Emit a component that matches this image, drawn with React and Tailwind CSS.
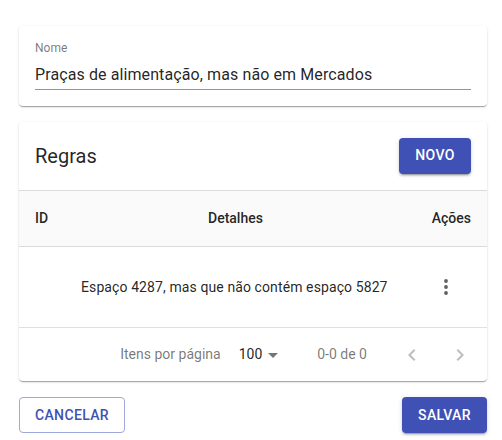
export default function App() {
  return (
    <div className="w-[502px] h-[440px] bg-white pl-[19px] pr-[15px] pt-[26px] text-[rgba(0,0,0,0.87)]" style={{ fontFamily: "Roboto, 'Liberation Sans', sans-serif" }}>
      {/* Nome card */}
      <div className="rounded shadow-[0_2px_1px_-1px_rgba(0,0,0,0.2),0_1px_1px_0_rgba(0,0,0,0.14),0_1px_3px_0_rgba(0,0,0,0.12)] px-4 pt-[16px] pb-[16px]">
        <div className="text-[12px] leading-[12px] text-[rgba(0,0,0,0.54)]">Nome</div>
        <div className="border-b border-[rgba(0,0,0,0.42)] pt-[11px] pb-[4px] text-[16px] leading-[20px] tracking-[0.1px]">
          Praças de alimentação, mas não em Mercados
        </div>
      </div>

      {/* Regras card */}
      <div className="mt-[16px] rounded shadow-[0_2px_1px_-1px_rgba(0,0,0,0.2),0_1px_1px_0_rgba(0,0,0,0.14),0_1px_3px_0_rgba(0,0,0,0.12)]">
        <div className="flex items-center justify-between px-4 h-[68px] pb-[1px]">
          <span className="text-[20px]">Regras</span>
          <button className="h-9 w-[72px] rounded bg-[#3f51b5] text-white text-[14px] font-medium tracking-wide shadow-[0_3px_1px_-2px_rgba(0,0,0,0.2),0_2px_2px_0_rgba(0,0,0,0.14),0_1px_5px_0_rgba(0,0,0,0.12)]">
            NOVO
          </button>
        </div>
        <div className="grid grid-cols-[173px_1fr_auto] items-center h-[57px] bg-[#fafafa] border-y border-[rgba(0,0,0,0.12)] px-4 text-[14px] font-medium">
          <span>ID</span>
          <span>Detalhes</span>
          <span className="text-right">Ações</span>
        </div>
        <div className="flex items-center h-[81px] border-b border-[rgba(0,0,0,0.12)] pl-[62px] pr-[29px] text-[14px] tracking-[0.1px]">
          <span className="flex-1">Espaço 4287, mas que não contém espaço 5827</span>
          <svg width="24" height="24" viewBox="0 0 24 24" fill="#616161">
            <circle cx="12" cy="6" r="1.9" />
            <circle cx="12" cy="12" r="1.9" />
            <circle cx="12" cy="18" r="1.9" />
          </svg>
        </div>
        <div className="flex items-center justify-end h-[53px] pr-[15px] text-[14px] text-[rgba(0,0,0,0.54)]">
          <span>Itens por página</span>
          <span className="ml-[18px] text-[rgba(0,0,0,0.87)]">100</span>
          <svg className="ml-[6px] mt-[2px]" width="10" height="5" viewBox="0 0 10 5" fill="rgba(0,0,0,0.54)">
            <path d="M0 0l5 5 5-5z" />
          </svg>
          <span className="ml-[39px]">0-0 de 0</span>
          <svg className="ml-[33px]" width="24" height="24" viewBox="0 0 24 24" fill="rgba(0,0,0,0.26)">
            <path d="M15.41 7.41L14 6l-6 6 6 6 1.41-1.41L10.83 12z" />
          </svg>
          <svg className="ml-[24px]" width="24" height="24" viewBox="0 0 24 24" fill="rgba(0,0,0,0.26)">
            <path d="M8.59 16.59L10 18l6-6-6-6-1.41 1.41L13.17 12z" />
          </svg>
        </div>
      </div>

      {/* Actions */}
      <div className="flex justify-between mt-[16px]">
        <button className="h-9 w-[106px] rounded border border-[#9fa8da] text-[#3f51b5] text-[14px] font-medium tracking-wide">
          CANCELAR
        </button>
        <button className="h-9 w-[85px] rounded bg-[#3f51b5] text-white text-[14px] font-medium tracking-wide shadow-[0_3px_1px_-2px_rgba(0,0,0,0.2),0_2px_2px_0_rgba(0,0,0,0.14),0_1px_5px_0_rgba(0,0,0,0.12)]">
          SALVAR
        </button>
      </div>
    </div>
  );
}
